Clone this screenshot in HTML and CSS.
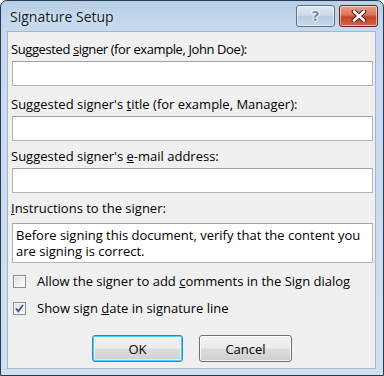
FILE: index.html
```html
<!DOCTYPE html>
<html>
<head>
<meta charset="utf-8">
<link rel="stylesheet" href="styles.css">
</head>
<body>
<div class="window">
  <div class="titlebar">
    <span class="title">Signature Setup</span>
    <div class="caption-buttons">
      <div class="cap-btn help"><span class="help-glyph">?</span></div>
      <div class="cap-btn close">
        <svg width="16" height="12" viewBox="0 0 16 12">
          <path d="M3 1.5 L13 10.5 M13 1.5 L3 10.5" stroke="#5a150c" stroke-width="4.6" stroke-linecap="round"/>
          <path d="M3 1.5 L13 10.5 M13 1.5 L3 10.5" stroke="#ffffff" stroke-width="2.6" stroke-linecap="round"/>
        </svg>
      </div>
    </div>
  </div>
  <div class="content">
    <div class="field f1">
      <label class="lbl tight">Suggested <u>s</u>igner (for example, John Doe):</label>
      <div class="input"></div>
    </div>
    <div class="field f2">
      <label class="lbl">Suggested signer's <u>t</u>itle (for example, Manager):</label>
      <div class="input"></div>
    </div>
    <div class="field f3">
      <label class="lbl">Suggested signer's <u>e</u>-mail address:</label>
      <div class="input"></div>
    </div>
    <div class="field f4">
      <label class="lbl"><u>I</u>nstructions to the signer:</label>
      <div class="textarea">Before signing this document, verify that the content you are signing is correct.</div>
    </div>
    <div class="check-row r1">
      <span class="checkbox"></span>
      <span class="check-label">Allow the signer to add <u>c</u>omments in the Sign dialog</span>
    </div>
    <div class="check-row r2">
      <span class="checkbox checked">
        <svg width="9" height="9" viewBox="0 0 9 9"><path d="M1 4.5 L3.3 7.2 L8 1" fill="none" stroke="#3d4f9a" stroke-width="1.8"/></svg>
      </span>
      <span class="check-label">Show sign <u>d</u>ate in signature line</span>
    </div>
    <div class="buttons">
      <div class="btn default">OK</div>
      <div class="btn cancel">Cancel</div>
    </div>
  </div>
</div>
</body>
</html>
```

FILE: styles.css
```css
html, body {
  margin: 0;
  padding: 0;
  background: #ffffff;
}

.window {
  width: 384px;
  height: 376px;
  box-sizing: border-box;
  border: 1px solid #283a4f;
  border-radius: 7px 7px 0 0;
  background: linear-gradient(180deg, #b8cfe8 0px, #c6d9ee 28px, #cfe0f1 100%);
  display: flex;
  flex-direction: column;
  padding: 0 7px 6px 6px;
  font-family: "Open Sans", "Noto Sans", sans-serif;
  font-size: 13px;
  color: #000;
}

.titlebar {
  height: 30px;
  display: flex;
  align-items: flex-start;
  justify-content: space-between;
}

.title {
  margin-left: 3px;
  margin-top: 6px;
  font-size: 14px;
  color: #141c29;
  text-shadow: 0 0 6px rgba(255,255,255,0.9);
}

.caption-buttons {
  display: flex;
  gap: 4px;
  margin-top: 4px;
  margin-right: -2px;
}

.cap-btn {
  width: 37px;
  height: 20px;
  border: 1px solid #5c6f87;
  border-radius: 3px;
  display: flex;
  align-items: center;
  justify-content: center;
  box-shadow: inset 0 0 0 1px rgba(255,255,255,0.55);
}

.help {
  background: linear-gradient(180deg, #dde8f4 0%, #cad9ea 48%, #b7cbe1 52%, #c7d8ec 100%);
}

.help-glyph {
  font-family: "DejaVu Sans", sans-serif;
  font-weight: bold;
  font-size: 14px;
  line-height: 14px;
  color: #7a8aa0;
  text-shadow: 1px 0 0 #fff, -1px 0 0 #fff, 0 1px 0 #fff, 0 -1px 0 #fff;
}

.close {
  border-color: #6b2218;
  background: linear-gradient(180deg, #e8a08f 0%, #d9725a 45%, #c4422a 55%, #d4654b 100%);
}

.content {
  flex: 1;
  background: #f0f0f0;
  border: 1px solid #a3b6cc;
  padding: 10px 2px 0 3px;
  display: flex;
  flex-direction: column;
}

.field {
  display: flex;
  flex-direction: column;
}

.lbl {
  line-height: 15px;
  white-space: nowrap;
}

.lbl.tight {
  letter-spacing: -0.4px;
}

.input {
  height: 23px;
  margin-top: 4px;
  margin-left: 1px;
  background: #ffffff;
  border: 1px solid #b1b4b8;
  border-top-color: #a0a3a8;
}

.f2 { margin-top: 11px; }
.f3 { margin-top: 8px; }
.f4 { margin-top: 8px; }

.textarea {
  height: 35px;
  margin-top: 7px;
  margin-left: 1px;
  background: #ffffff;
  border: 1px solid #b1b4b8;
  border-top-color: #a0a3a8;
  padding: 3px 4px 0 3px;
  line-height: 16px;
}

.check-row {
  display: flex;
  align-items: center;
  gap: 11px;
  margin-left: 2px;
  height: 15px;
  line-height: 15px;
}

.r1 { margin-top: 11px; }
.r2 { margin-top: 12px; }

.checkbox {
  width: 11px;
  height: 11px;
  border: 1px solid #8f8f8f;
  background: linear-gradient(135deg, #dcdcdc 0%, #f2f2f2 60%, #ffffff 100%);
  box-shadow: inset 0 0 0 1px #f4f4f4;
  display: flex;
  align-items: center;
  justify-content: center;
  flex-shrink: 0;
}

.check-label {
  white-space: nowrap;
}

.buttons {
  display: flex;
  justify-content: center;
  gap: 16px;
  margin-top: 19px;
}

.btn {
  height: 27px;
  box-sizing: border-box;
  border: 1px solid #707070;
  border-radius: 3px;
  display: flex;
  align-items: center;
  justify-content: center;
  background: linear-gradient(180deg, #f2f2f2 0%, #ebebeb 48%, #dddddd 52%, #cfcfcf 100%);
  box-shadow: inset 0 0 0 1px rgba(255,255,255,0.8);
}

.btn.default {
  width: 91px;
  border-color: #3c7fb1;
  box-shadow: inset 0 0 0 1px #48d3fb, inset 0 0 0 2px rgba(255,255,255,0.5);
}

.btn.cancel {
  width: 93px;
}
```
